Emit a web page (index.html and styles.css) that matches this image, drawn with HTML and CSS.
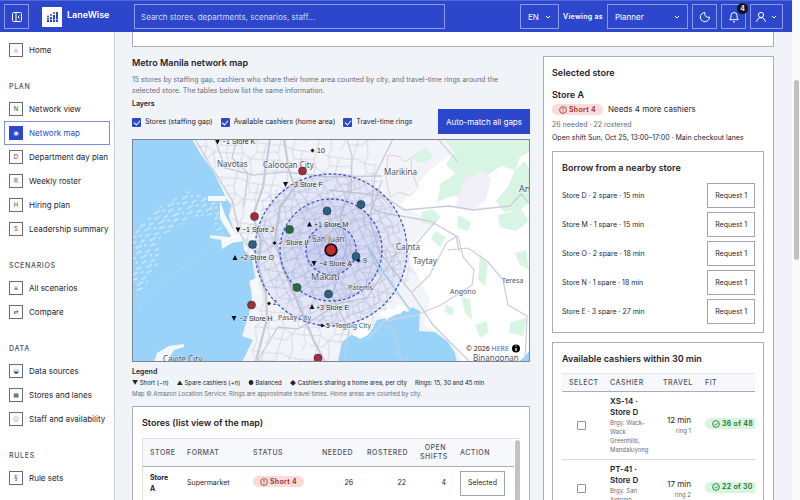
FILE: index.html
```html
<!DOCTYPE html>
<html lang="en">
<head>
<meta charset="utf-8">
<title>LaneWise – Network map</title>
<link rel="stylesheet" href="styles.css">
</head>
<body>
<div class="app">
  <header class="topbar">
    <button class="ghost square" type="button" aria-label="Collapse menu">
      <svg class="icon thin" viewBox="0 0 12 12"><rect x="1.500" y="1.500" width="9" height="9" rx="1"/><path d="M5 1.500v9M8.500 4.500 7 6l1.500 1.500"/></svg>
    </button>
    <a class="brand" href="#">
      <svg class="logo" viewBox="0 0 20 20"><rect width="20" height="20" fill="#fff"/><g fill="#2c47cc"><rect x="5" y="11" width="2" height="4"/><rect x="8" y="10" width="2" height="5"/><rect x="11" y="8" width="2" height="7"/><rect x="14" y="5" width="2" height="10"/><circle cx="6" cy="9.500" r="1"/><circle cx="9" cy="8" r="1"/><circle cx="12" cy="6" r="1"/></g><path d="M4 12.500h12" stroke="#fff" stroke-width="0.500"/></svg>
      <span>LaneWise</span>
    </a>
    <input class="search" type="search" aria-label="Search" placeholder="Search stores, departments, scenarios, staff...">
    <div class="tools">
      <div class="pick lang"><select aria-label="Language"><option>EN</option></select><svg class="chev" viewBox="0 0 8 8"><path d="m2 3 2 2 2-2"/></svg></div>
      <label class="viewing" for="role">Viewing as</label>
      <div class="pick role"><select id="role"><option>Planner</option></select><svg class="chev" viewBox="0 0 8 8"><path d="m2 3 2 2 2-2"/></svg></div>
      <button class="ghost square" type="button" aria-label="Dark mode"><svg class="icon" viewBox="0 0 12 12"><path d="M6 1.500A3.400 3.400 0 0 0 10.500 6 4.600 4.600 0 1 1 6 1.500Z"/></svg></button>
      <button class="ghost square bell" type="button" aria-label="Notifications"><svg class="icon" viewBox="0 0 12 12"><path d="M1.700 8.700C2.700 7.700 3 7 3 4.500a3 3 0 0 1 6 0C9 7 9.300 7.700 10.300 8.700ZM5 10.700q1 .8 2 0"/></svg><span class="badge">4</span></button>
      <button class="ghost user" type="button" aria-label="Account"><svg class="icon" viewBox="0 0 12 12"><circle cx="6" cy="4" r="2.600"/><path d="M1.700 10.800C2 8.200 3.600 6.700 6 6.700s4 1.500 4.300 4.100"/></svg><svg class="chev" viewBox="0 0 8 8"><path d="m2 3 2 2 2-2"/></svg></button>
    </div>
  </header>

  <div class="shell">
    <nav class="side" aria-label="Main">
      <ul><li><a href="#"><i class="faint">⌂</i>Home</a></li></ul>
      <h2>Plan</h2>
      <ul>
        <li><a href="#"><i>N</i>Network view</a></li>
        <li><a href="#" class="active" aria-current="page"><i>◉</i>Network map</a></li>
        <li><a href="#"><i>D</i>Department day plan</a></li>
        <li><a href="#"><i>R</i>Weekly roster</a></li>
        <li><a href="#"><i>H</i>Hiring plan</a></li>
        <li><a href="#"><i>S</i>Leadership summary</a></li>
      </ul>
      <h2>Scenarios</h2>
      <ul>
        <li><a href="#"><i>≡</i>All scenarios</a></li>
        <li><a href="#"><i>⇄</i>Compare</a></li>
      </ul>
      <h2>Data</h2>
      <ul>
        <li><a href="#"><i>◒</i>Data sources</a></li>
        <li><a href="#"><i>▦</i>Stores and lanes</a></li>
        <li><a href="#"><i class="faint">☺</i>Staff and availability</a></li>
      </ul>
      <h2>Rules</h2>
      <ul><li><a href="#"><i>§</i>Rule sets</a></li></ul>
    </nav>

    <main class="content">
      <div class="card tail"></div>
      <div class="columns">
        <section class="left">
          <h1>Metro Manila network map</h1>
          <p class="intro">15 stores by staffing gap, cashiers who share their home area counted by city, and travel-time rings around the selected store. The tables below list the same information.</p>
          <div class="controls">
            <fieldset class="layers">
              <legend>Layers</legend>
              <div class="checks">
                <label><input class="tick" type="checkbox" checked>Stores (staffing gap)</label>
                <label><input class="tick" type="checkbox" checked>Available cashiers (home area)</label>
                <label><input class="tick" type="checkbox" checked>Travel-time rings</label>
              </div>
            </fieldset>
            <button class="primary" type="button">Auto-match all gaps</button>
          </div>

          <svg class="map" viewBox="133 140 396 221" preserveAspectRatio="xMidYMid slice" role="img" aria-label="Map of Metro Manila stores">
            <defs>
              <pattern id="streets" width="37" height="41" patternUnits="userSpaceOnUse" patternTransform="rotate(11)">
                <path d="M0 8 12 6 19 9 37 8M0 24 9 22 17 26 37 24M7 0 6 15 9 22 7 41M21 0 19 9 23 18 17 26 21 41M30 8 29 24 33 33 30 41M0 34 13 33 17 26M23 18 37 16M0 15 6 15" fill="none" stroke="#d3d6e1" stroke-width="0.900"/>
              </pattern>
              <pattern id="dense" width="23" height="19" patternUnits="userSpaceOnUse" patternTransform="rotate(-24)">
                <path d="M0 5 8 3 14 6 23 5M0 14 10 12 23 14M5 0 6 9 5 19M14 0 14 6 11 12 14 19M19 5 18 14" fill="none" stroke="#c6cadc" stroke-width="0.800"/>
              </pattern>
              <pattern id="waves" width="16" height="11" patternUnits="userSpaceOnUse" patternTransform="rotate(-28)">
                <path d="M1 2h6M10 5h5M3 8h7M12 10h3" stroke="#cdeafc" stroke-width="1.500"/>
              </pattern>
            </defs>
            <rect x="132" y="139" width="398" height="223" fill="#f3f4fa"/>
            <path fill="#fff" d="M405 250 450 210 530 206V362H463L450 340 424 325 430 300ZM470 139H530V215L470 205 440 225 400 205 430 170Z"/>
            <g fill="#d8f5e3">
              <path d="m445 140 9 12-8 12 9 10-14 9-4 19 15-6 21 2 10-19 18-13 14 4 5-13 13-7V139Z"/>
              <path d="m515 170 10-9 5 8v33l-10 8-16 2-8-11 12-14Z"/>
              <path d="m412 155 14-7 8 8-9 7-10-2ZM422 212l10-3 9 8-8 8-12-2Z"/>
              <path d="m458 215 13 7-3 9-10-3ZM435 231l11 6-6 10-9-8ZM498 215l23-6 8 12-13 10-16-4Z"/>
              <path d="m480 254 8 10-3 22-7-6ZM461 296l9 4 2 20-7-7ZM515 253l11-3 3 20-9-5ZM475 325l12-4 1 12-8 5ZM510 322l17-4-4 18-14-3ZM446 305l8 3-2 8-8-5Z"/>
            </g>
            <path fill="#f1effa" d="m464 180 18-9 9 8-5 21-14 10-17-2Z"/>
            <path fill="url(#streets)" d="M192 139H375L380 200 402 240 420 270 400 290 385 315 365 335 338 362H243L256 340 250 280 230 215 225 190Z"/>
            <path fill="url(#dense)" d="M262 200 290 178 340 172 380 190 400 225 402 275 370 315 325 326 280 300 255 255Z"/>
            <path fill="#99d3f9" d="M132 139h60l8 14 13 18 8 16 5 11 5 7-2 11 6 17 8 8 1 9 8 8 3 20-5 4 2 17-3 15-7 22 11 4-6 12-5 10H132Z"/>
            <path fill="url(#waves)" d="M133 230 160 207 188 191 216 200 220 214 192 217 163 235 143 256 133 290ZM133 245 157 240 160 262 137 300ZM214 212 225 215 226 235 215 232Z"/>
            <g fill="#f7f8fc">
              <path d="M208 196h18v5h-18ZM220 201l5 14 12 21-5 2-12-20ZM210 235l19 2 13-4 2 8-12 2-10 6-1-9-11-2ZM249 281l8-3 4 15-8 4ZM154 362l3-9 12-7 15-2v3l-10 3-7 12Z"/>
            </g>
            <path fill="none" stroke="#b8dcf5" stroke-dasharray="3 3" d="M139 310q13-25 40-40t48-39M211 206l20 31"/>
            <path fill="#99d3f9" d="m338 362 4-20 9-7 10 3 11-9 5-9 15-3 9-7 7 2 4-5 8 4-1 20 16 1 13 10 7 11 2 9ZM519 362l8-8 3-5v13Z"/>
            <path fill="#fff" d="m352 334 6-8 5 4 6-7 5 3-6 9-8 4ZM380 315l8-7 5 2 6-6 8 3-7 7-8 1-5 5Z"/>
            <path fill="none" stroke="#b4d4ed" stroke-width="2" d="m369 248 16 27 25 35"/>
            <g fill="none" stroke="#c8ccd9" stroke-width="1.300">
              <path d="m270 139-7 48-10 29 8 25-3 23 8 30 1 25-11 42M284 139l5 32 6 16-15 20-5 32 8 29 31 73 11 21" stroke-width="2.300"/>
              <path d="m195 139 17 29 20 32 7 31 7 13 16 12M215 139l10 29 28 7 33-3 43 5 53-1M237 139l-5 19 16 15-4 33"/>
              <path d="m347 139 5 17-1 34-11 26 7 30-15 50 17 34-5 32M393 139l-18 36-5 45 10 33 31 39 22 33 37 37"/>
              <path d="m329 190 55 6 20 14 45-4 24 4 37-4 11-12 9 10M382 180l-10 29 12 4 46 8 26 15 3 15M397 252l-30 46-27 5-42 26-20-2-20 33"/>
              <path d="m438 139 20 23M410 251l26-30M412 292l17-16 18-34 11-6 5 21 11 13-2 15-31 20-25 10-32 6-17 19" stroke="#d0d3df"/>
              <path d="m448 250 20-2 20 14 15 18 5 25 19 11-2 46M384 325l9 4 8 32" stroke-width="1.200"/>
            </g>
            <path fill="none" stroke="#e8ccd7" d="m388 155 10 1 7 6 7-5-1 13 7 17-8 9-11-4-9 5-4-20ZM375 230l18 30M365 179l28 30"/>
            <g fill="#445ddd" fill-opacity="0.080" stroke="#4258ce" stroke-width="1.300" stroke-dasharray="3 2">
              <circle cx="331" cy="250" r="76"/><circle cx="331" cy="250" r="51"/><circle cx="331" cy="250" r="25"/>
            </g>
            <g class="city">
              <text x="217" y="167">Navotas</text><text x="263" y="168">Caloocan City</text><text x="384" y="175">Marikina</text><text class="major" x="519" y="192">Antipolo</text>
              <text x="312" y="242">San Juan</text><text x="396" y="250">Cainta</text><text x="413" y="264">Taytay</text><text class="major" x="311" y="280">Makati</text>
              <g class="minor"><text x="348" y="290">Pateros</text><text x="278" y="320">Pasay City</text><text x="335" y="328">Taguig City</text>
              <text x="450" y="294">Angono</text><text x="502" y="283">Teresa</text></g><text x="163" y="362">Cavite City</text><text x="473" y="361">Binangonan</text>
            </g>
            <g class="pins">
              <g fill="#a62d35"><circle cx="302.500" cy="171" r="4"/><circle cx="254.500" cy="216.500" r="4"/><circle cx="251.500" cy="305" r="4"/><circle cx="318" cy="358" r="4"/></g>
              <g fill="#2b627f"><circle cx="327" cy="211" r="4"/><circle cx="361" cy="204.500" r="4"/><circle cx="252.500" cy="244.500" r="4"/><circle cx="356" cy="256.500" r="4"/><circle cx="328.500" cy="294" r="4"/></g>
              <g fill="#286e35"><circle cx="289.500" cy="229.500" r="4"/><circle cx="297" cy="287.500" r="4"/></g>
              <circle cx="331" cy="250" r="5.800" fill="#c42b2d" stroke="#111" stroke-width="1.800"/>
            </g>
            <g fill="#111">
              <path d="M215 139.500h5l-2.500 5ZM283 182h5l-2.500 5ZM235.500 227.500h5l-2.500 5ZM311.500 261h5l-2.500 5ZM231.500 316h5l-2.500 5ZM307 226.500h5l-2.500-5ZM232.500 260h5l-2.500-5ZM309.500 309h5l-2.500-5Z"/>
              <path d="m312.500 148.500 2 2-2 2-2-2ZM274.500 241l2 2-2 2-2-2ZM358.500 258.500l2 2-2 2-2-2ZM269 301.500l2 2-2 2-2-2ZM322 323.500l2 2-2 2-2-2Z"/>
            </g>
            <g class="pin-label">
              <text x="222" y="144">−1 Store K</text><text x="317" y="153">10</text><text x="290" y="187">−3 Store F</text><text x="242" y="232">−1 Store J</text><text x="278" y="245">✓ Store L</text><text x="314" y="227">+1 Store M</text>
              <text x="240" y="260">+2 Store O</text><text x="319" y="266">−4 Store A</text><text x="363" y="263">9</text><text x="273" y="305">2</text><text x="316" y="310">+3 Store E</text><text x="326" y="328">5</text><text x="239" y="321">−2 Store H</text>
            </g>
            <text class="credit" x="466" y="351">© 2026 <tspan fill="#4a5fc8">HERE</tspan></text>
            <circle cx="516" cy="348.500" r="4"/><path d="M516 348v3M516 345.500v1" stroke="#fff" stroke-width="1.300"/>
          </svg>

          <div class="key">
            <strong>Legend</strong>
            <ul><li>▼ Short (−n)</li><li>▲ Spare cashiers (+n)</li><li>● Balanced</li><li>◆ Cashiers sharing a home area, per city</li><li>Rings: 15, 30 and 45 min</li></ul>
            <p>Map © Amazon Location Service. Rings are approximate travel times. Home areas are counted by city.</p>
          </div>

          <div class="card list">
            <h2>Stores (list view of the map)</h2>
            <div class="scroller">
              <table class="stores">
                <thead><tr><th class="c-store">Store</th><th class="c-format">Format</th><th class="c-status">Status</th><th class="num c-need">Needed</th><th class="num c-rost">Rostered</th><th class="num c-open">Open shifts</th><th>Action</th></tr></thead>
                <tbody><tr><th scope="row">Store A</th><td>Supermarket</td><td><span class="pill bad"><svg viewBox="0 0 8 8"><circle cx="4" cy="4" r="3.400"/><path d="M4 2v2.500M4 5.500v.7"/></svg>Short 4</span></td><td class="num">26</td><td class="num">22</td><td class="num">4</td><td><button class="outline" type="button">Selected</button></td></tr></tbody>
              </table>
              <span class="thumb"></span>
            </div>
          </div>
        </section>

        <aside class="card right">
          <h2>Selected store</h2>
          <h3>Store A</h3>
          <p class="state"><span class="pill bad"><svg viewBox="0 0 8 8"><circle cx="4" cy="4" r="3.400"/><path d="M4 2v2.500M4 5.500v.7"/></svg>Short 4</span>Needs 4 more cashiers</p>
          <p class="muted">26 needed · 22 rostered</p>
          <p>Open shift Sun, Oct 25, 13:00–17:00 · Main checkout lanes</p>
          <section class="card inner">
            <h2>Borrow from a nearby store</h2>
            <ul class="borrow">
              <li>Store D · 2 spare · 15 min<button class="outline" type="button">Request 1</button></li>
              <li>Store M · 1 spare · 15 min<button class="outline" type="button">Request 1</button></li>
              <li>Store O · 2 spare · 18 min<button class="outline" type="button">Request 1</button></li>
              <li>Store N · 1 spare · 18 min<button class="outline" type="button">Request 1</button></li>
              <li>Store E · 3 spare · 27 min<button class="outline" type="button">Request 1</button></li>
            </ul>
          </section>
          <section class="card inner">
            <h2>Available cashiers within 30 min</h2>
            <div class="clip">
              <table class="people">
                <thead><tr><th class="c-sel">Select</th><th class="c-cash">Cashier</th><th class="num c-trav">Travel</th><th>Fit</th></tr></thead>
                <tbody>
                  <tr><td class="mid"><input class="box" type="checkbox" aria-label="Select XS-14"></td><td><b>XS-14 · Store D</b><small>Brgy. Wack-Wack Greenhills, Mandaluyong</small></td><td class="num">12 min<small>ring 1</small></td><td><span class="pill good"><svg viewBox="0 0 8 8"><circle cx="4" cy="4" r="3.400"/><path d="m2.500 4 1.200 1.200 2-2.200"/></svg>36 of 48 h</span></td></tr>
                  <tr><td class="mid"><input class="box" type="checkbox" aria-label="Select PT-41"></td><td><b>PT-41 · Store D</b><small>Brgy. San Antonio, Pasig</small></td><td class="num">17 min<small>ring 2</small></td><td><span class="pill good"><svg viewBox="0 0 8 8"><circle cx="4" cy="4" r="3.400"/><path d="m2.500 4 1.200 1.200 2-2.200"/></svg>22 of 30 h</span></td></tr>
                </tbody>
              </table>
            </div>
          </section>
        </aside>
      </div>
    </main>
  </div>
</div>
<div class="rail"><span></span></div>
</body>
</html>
```

FILE: styles.css
```css
* { box-sizing: border-box; }
body {
  margin: 0; height: 100vh; overflow: hidden;
  display: grid; grid-template-columns: minmax(0, 1fr) 8px;
  font: 8px/12px Inter, "DejaVu Sans", sans-serif; color: #1f242d;
}
h1, h2, h3, p, ul { margin: 0; padding: 0; }
ul { list-style: none; }
a { color: inherit; text-decoration: none; }
button, input, select { font: inherit; color: inherit; margin: 0; border-radius: 0; }
.app { height: 100vh; display: flex; flex-direction: column; overflow: hidden; }

.topbar { flex: none; display: flex; align-items: center; height: 32px; padding: 0 9px 0 4px; background: #2c47cc; color: #fff; border-top: 1px solid #5168da; }
.ghost { height: 25px; padding: 0; display: flex; align-items: center; justify-content: center; gap: 3px; background: none; border: 1px solid #8b9be6; }
.square { width: 25px; }
.user { width: 33px; }
.icon { width: 12px; height: 12px; fill: none; stroke: #fff; stroke-width: 1; }
.chev { width: 8px; height: 8px; fill: none; stroke: #fff; stroke-width: 1; }
.brand { display: flex; gap: 5px; margin-left: 13px; width: 92px; font-size: 9px; font-weight: 600; line-height: 16px; }
.logo { width: 20px; height: 20px; }
.search { width: 311px; height: 25px; padding: 0 6px; background: none; border: 1px solid #8b9be6; appearance: none; }
.search::placeholder { color: #d3daf8; opacity: 1; }
.tools { margin-left: auto; display: flex; align-items: center; gap: 4px; }
.pick { position: relative; }
.pick select { width: 100%; height: 25px; padding: 0 7px; appearance: none; background: none; border: 1px solid #8b9be6; }
.pick .chev { position: absolute; right: 7px; top: 9px; pointer-events: none; }
.lang { width: 39px; }
.role { width: 81px; }
.viewing { font-size: 7px; font-weight: 600; letter-spacing: 0.3px; }
.bell { position: relative; }
.badge { position: absolute; top: -2px; right: -3px; width: 11px; height: 11px; border-radius: 6px; background: #101318; font-size: 7px; line-height: 11px; font-weight: 600; }

.shell { flex: 1; min-height: 0; display: grid; grid-template-columns: 115px minmax(0, 1fr); }
.side { padding: 6px 4px; background: #fff; border-right: 1px solid #c8ccd6; overflow: hidden; }
.side h2 { margin: 19px 0 4px 5px; font-size: 7px; line-height: 12px; font-weight: 500; letter-spacing: 0.7px; text-transform: uppercase; color: #4b515d; }
.side a { display: flex; align-items: center; gap: 6px; height: 24px; padding: 0 4px; border: 1px solid transparent; white-space: nowrap; }
.side i { flex: none; width: 14px; height: 14px; border: 1px solid #666b75; font-style: normal; font-size: 6px; line-height: 12px; text-align: center; color: #444953; }
.side .faint { color: #9095a0; }
.side .active { color: #2c47cc; border-color: #7f8fde; }
.side .active i { background: #2c47cc; border-color: #2c47cc; color: #fff; }

.content { padding: 0 18px 0 17px; background: #f0f3f8; overflow: hidden; }
.card { background: #fff; border: 1px solid #a9aeb9; }
.tail { height: 15px; border-top: 0; }
.columns { display: grid; grid-template-columns: minmax(0, 1fr) 231px; gap: 13px; margin-top: 9px; }
h1 { margin-top: 1px; font-size: 9px; line-height: 12px; font-weight: 600; }
.card h2 { font-size: 9px; line-height: 12px; font-weight: 600; }
.intro { max-width: 380px; margin-top: 5px; font-size: 7px; line-height: 11px; color: #6a707c; }
.controls { display: flex; justify-content: space-between; align-items: flex-end; margin-top: 3px; }
.layers { border: 0; margin: 0; padding: 0; min-width: 0; }
.layers legend { padding: 0; font-size: 7px; font-weight: 600; line-height: 10px; }
.checks { display: flex; gap: 8px; padding: 7px 0 6px; font-size: 7px; }
.checks label { display: flex; align-items: center; gap: 4px; white-space: nowrap; }
.tick { appearance: none; width: 9px; height: 9px; background: #2c47cc; border-radius: 1px; display: grid; place-items: center; }
.tick::after { content: ""; width: 3px; height: 5px; margin-top: -1px; border: solid #fff; border-width: 0 1px 1px 0; transform: rotate(42deg); }
.tick:not(:checked)::after { display: none; }
.primary { height: 25px; padding: 0 7px; border: 1px solid #2c47cc; background: #2c47cc; color: #fff; white-space: nowrap; }
.map { display: block; width: 100%; height: 223px; margin-top: 5px; border: 1px solid #7e8591; }
.city { font-family: "Noto Sans", sans-serif; font-size: 8px; fill: #51545e; paint-order: stroke; stroke: #fff; stroke-opacity: 0.6; stroke-width: 1px; }
.city .major { font-size: 9px; }
.city .minor { font-size: 7px; }
.pins { stroke: #24313d; stroke-width: 0.6; }
.pin-label { font-family: "Liberation Sans", "DejaVu Sans", sans-serif; font-size: 7px; fill: #222; paint-order: stroke; stroke: #fff; stroke-opacity: 0.8; stroke-width: 1px; }
.credit { font-family: "Noto Sans", sans-serif; font-size: 7px; fill: #222; }
.key { margin-top: 4px; font-size: 6px; line-height: 11px; }
.key strong { display: block; font-size: 7px; font-weight: 600; }
.key ul { display: flex; gap: 8px; white-space: nowrap; }
.key p { color: #6a707c; }
.list { margin-top: 7px; padding: 10px 9px; }
.scroller { display: flex; gap: 1px; margin-top: 9px; border: 1px solid #e1e4ea; border-right: 0; }
.thumb { width: 5px; margin-top: 1px; background: #c1c3c7; border-radius: 3px 3px 0 0; }
table { border-collapse: collapse; table-layout: fixed; width: 100%; }
thead { background: #f6f8fb; }
thead th { padding: 0 7px; font-size: 7px; line-height: 9px; font-weight: 500; letter-spacing: 0.5px; text-transform: uppercase; color: #4f5561; text-align: left; border-bottom: 1px solid #a9aeb9; }
tbody th { padding: 0 7px; text-align: left; font-size: 7px; font-weight: 650; line-height: 11px; }
td { padding: 0 7px; border-bottom: 1px solid #d8dbe1; }
tbody th { border-bottom: 1px solid #d8dbe1; }
thead th.num, td.num { text-align: right; }
.stores thead th { height: 27px; }
.stores td { height: 34px; font-size: 7px; }
.c-store { width: 37px; }
.c-format { width: 66px; }
.c-status { width: 66px; }
.c-need { width: 48px; }
.c-rost { width: 53px; }
.c-open { width: 40px; }
.outline { height: 25px; padding: 0 7px; background: #fff; border: 1px solid #a0a4ad; font-size: 7px; white-space: nowrap; }
.pill { display: inline-flex; align-items: center; gap: 2px; height: 11px; padding: 0 7px; border-radius: 6px; font-size: 7px; font-weight: 600; letter-spacing: 0.3px; white-space: nowrap; }
.pill svg { width: 8px; height: 8px; fill: none; stroke: currentColor; stroke-width: 0.8; }
.bad { background: #fbdada; color: #9b2c2c; }
.good { background: #d5f8dd; color: #23693a; }

.right { padding: 10px 9px 10px 8px; }
.right h3 { margin-top: 10px; font-size: 9px; line-height: 12px; font-weight: 600; }
.right p { font-size: 7px; line-height: 13px; white-space: nowrap; }
.right .state { display: flex; align-items: center; gap: 5px; height: 17px; font-size: 8px; }
.right .muted { color: #666c78; }
.inner { margin-top: 7px; padding: 10px 8px 8px 9px; }
.inner + .inner { margin-top: 9px; }
.borrow { display: grid; gap: 4px; margin-top: 9px; }
.borrow li { display: flex; justify-content: space-between; align-items: center; font-size: 7px; }
.clip { overflow: hidden; margin-top: 8px; border-top: 1px solid #e1e4ea; }
.people thead th { height: 17px; }
.people td { padding: 4px 7px 5px; }
.people b { display: block; font-size: 8px; line-height: 11px; font-weight: 600; }
.people small { display: block; font-size: 6px; line-height: 9px; color: #666c78; }
.people td.mid { padding: 4px 2px 5px 0; text-align: center; }
.c-sel { width: 41px; }
.c-cash { width: 53px; }
.c-trav { width: 42px; }
.box { appearance: none; width: 9px; height: 9px; border: 1px solid #8d929c; border-radius: 1px; background: #fff; vertical-align: middle; }
.rail { background: #fafafa; padding: 80px 1px 0 2px; }
.rail span { display: block; height: 180px; border-radius: 3px; background: #c1c1c1; }
```
